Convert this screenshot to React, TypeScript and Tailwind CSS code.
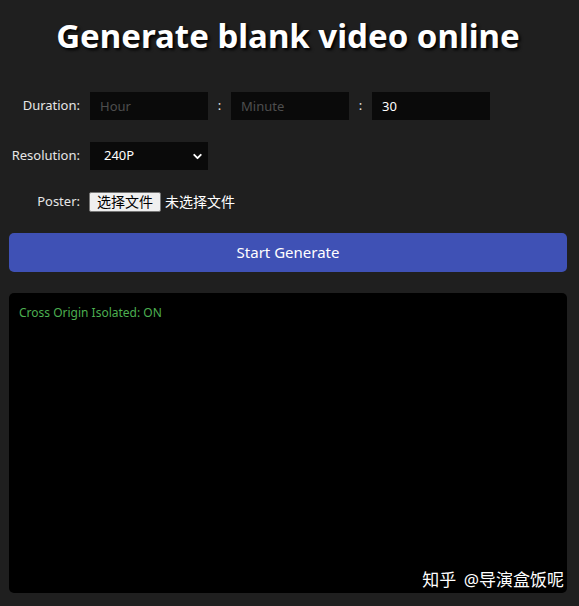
import { ChevronDown } from "lucide-react";

const font = "font-['Noto_Sans','Noto_Sans_CJK_SC',sans-serif]";

function DurationInput({ placeholder, value }: { placeholder: string; value?: string }) {
  return (
    <input
      className="h-[28px] w-[118px] bg-[#0a0a0a] px-[10px] text-[13px] text-white placeholder:text-[#4e4e4e] outline-none"
      placeholder={placeholder}
      defaultValue={value}
    />
  );
}

export default function App() {
  return (
    <div className={`relative min-h-[606px] bg-[#1f1f1f] pl-[9px] pr-[12px] pt-[12px] ${font}`}>
      <h1 className="text-center text-[33px] font-bold leading-[48px] text-white [text-shadow:2px_2px_3px_#000]">
        Generate blank video online
      </h1>

      <div className="mt-[32px] flex flex-col">
        {/* Duration */}
        <div className="flex items-center">
          <label className="w-[71px] text-right text-[13px] text-[#e6e6e6]">Duration:</label>
          <div className="ml-[10px] flex items-center">
            <DurationInput placeholder="Hour" />
            <span className="w-[23px] text-center text-[13px] text-[#e6e6e6]">:</span>
            <DurationInput placeholder="Minute" />
            <span className="w-[23px] text-center text-[13px] text-[#e6e6e6]">:</span>
            <DurationInput placeholder="" value="30" />
          </div>
        </div>

        {/* Resolution */}
        <div className="mt-[22px] flex items-center">
          <label className="w-[71px] text-right text-[13px] text-[#e6e6e6]">Resolution:</label>
          <div className="ml-[10px] flex h-[28px] w-[118px] items-center justify-between bg-[#0a0a0a] pl-[14px] pr-[4px] text-[13px] text-white">
            <span>240P</span>
            <ChevronDown size={13} strokeWidth={3.5} />
          </div>
        </div>

        {/* Poster */}
        <div className="mt-[21px] flex items-center">
          <label className="w-[71px] text-right text-[13px] text-[#e6e6e6]">Poster:</label>
          <div className="ml-[9px] flex items-center text-[14px]">
            <button className="h-[20px] rounded-[2px] border border-[#767676] bg-[#efefef] px-[7px] leading-[18px] text-black">
              选择文件
            </button>
            <span className="ml-[4px] text-white">未选择文件</span>
          </div>
        </div>
      </div>

      <button className="mt-[21px] h-[39px] w-full rounded-[5px] bg-[#3f51b5] text-[15px] text-white">
        Start Generate
      </button>

      <div className="mt-[21px] h-[300px] rounded-[5px] bg-black px-[10px] py-[11px]">
        <p className="text-[12px] text-[#4caf50]">Cross Origin Isolated: ON</p>
      </div>

      <div className="absolute bottom-[14px] right-[15px] text-[17px] text-white">
        知乎 <span className="ml-[3px]">@导演盒饭呢</span>
      </div>
    </div>
  );
}
